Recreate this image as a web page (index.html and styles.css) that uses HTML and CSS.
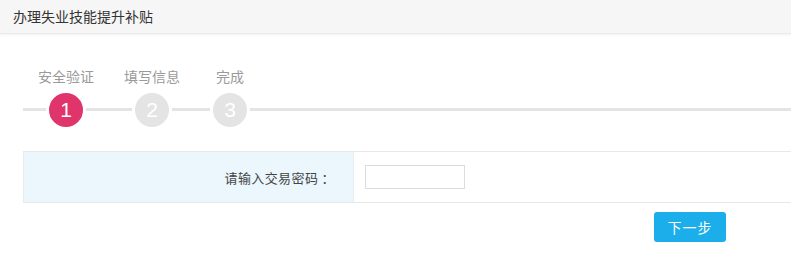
FILE: index.html
```html
<!DOCTYPE html>
<html lang="zh-CN">
<head>
<meta charset="utf-8">
<title>办理失业技能提升补贴</title>
<link rel="stylesheet" href="styles.css">
</head>
<body>
<header class="page-head">办理失业技能提升补贴</header>
<div class="steps">
  <div class="step">
    <div class="step-label">安全验证</div>
    <div class="step-dot active">1</div>
  </div>
  <div class="step">
    <div class="step-label">填写信息</div>
    <div class="step-dot">2</div>
  </div>
  <div class="step step-short">
    <div class="step-label">完成</div>
    <div class="step-dot">3</div>
  </div>
</div>
<div class="form-row">
  <div class="form-label">请输入交易密码 ：</div>
  <div class="form-field"><input class="pwd" type="password"></div>
</div>
<div class="actions">
  <button class="btn-next" type="button">下一步</button>
</div>
</body>
</html>
```
FILE: styles.css
```css
html, body {
  margin: 0;
  padding: 0;
  background: #fff;
  font-family: "Noto Sans CJK SC", "Noto Sans", sans-serif;
  overflow: hidden;
}
.page-head {
  height: 33px;
  line-height: 33px;
  padding-left: 13px;
  background: #f6f6f6;
  color: #333;
  font-size: 14px;
  border-bottom: 1px solid #ebebeb;
  box-shadow: 0 1px 2px #f2f2f2;
}
.steps {
  margin: 32px 0 0 23px;
  padding-left: 15px;
  display: flex;
  gap: 30px;
  background: linear-gradient(#e4e4e4, #e4e4e4) 0 42px / 100% 3px no-repeat;
}
.step {
  width: 56px;
  display: flex;
  flex-direction: column;
  align-items: center;
  gap: 4px;
}
.step-short {
  width: 40px;
}
.step-label {
  height: 20px;
  line-height: 20px;
  font-size: 14px;
  color: #9a9a9a;
  white-space: nowrap;
}
.step-dot {
  width: 34px;
  height: 34px;
  border: 3px solid #fff;
  border-radius: 50%;
  background: #e4e4e4;
  color: #fff;
  font-family: "Liberation Sans", sans-serif;
  font-size: 21px;
  line-height: 34px;
  text-align: center;
}
.step-dot.active {
  background: #e0356a;
}
.form-row {
  margin: 21px 0 0 23px;
  display: flex;
  height: 50px;
  border-top: 1px solid #e8e8e8;
  border-bottom: 1px solid #e8e8e8;
}
.form-label {
  width: 311px;
  padding-right: 18px;
  background: #ebf6fd;
  border-left: 1px solid #ececec;
  border-right: 1px solid #e6eef4;
  color: #444;
  font-size: 13px;
  letter-spacing: 0.4px;
  display: flex;
  align-items: center;
  justify-content: flex-end;
}
.form-field {
  flex: 1;
  display: flex;
  align-items: center;
  padding-left: 11px;
}
.pwd {
  box-sizing: border-box;
  width: 100px;
  height: 24px;
  margin: 0;
  border: 1px solid #dcdcdc;
  background: #fff;
  outline: none;
}
.actions {
  display: flex;
  justify-content: flex-end;
  padding-right: 65px;
  margin-top: 9px;
}
.btn-next {
  width: 72px;
  height: 30px;
  border: none;
  border-radius: 3px;
  background: #1caeea;
  color: #fff;
  font-family: "Noto Sans CJK SC", sans-serif;
  font-size: 14px;
  letter-spacing: 1px;
  padding: 0;
}
```
